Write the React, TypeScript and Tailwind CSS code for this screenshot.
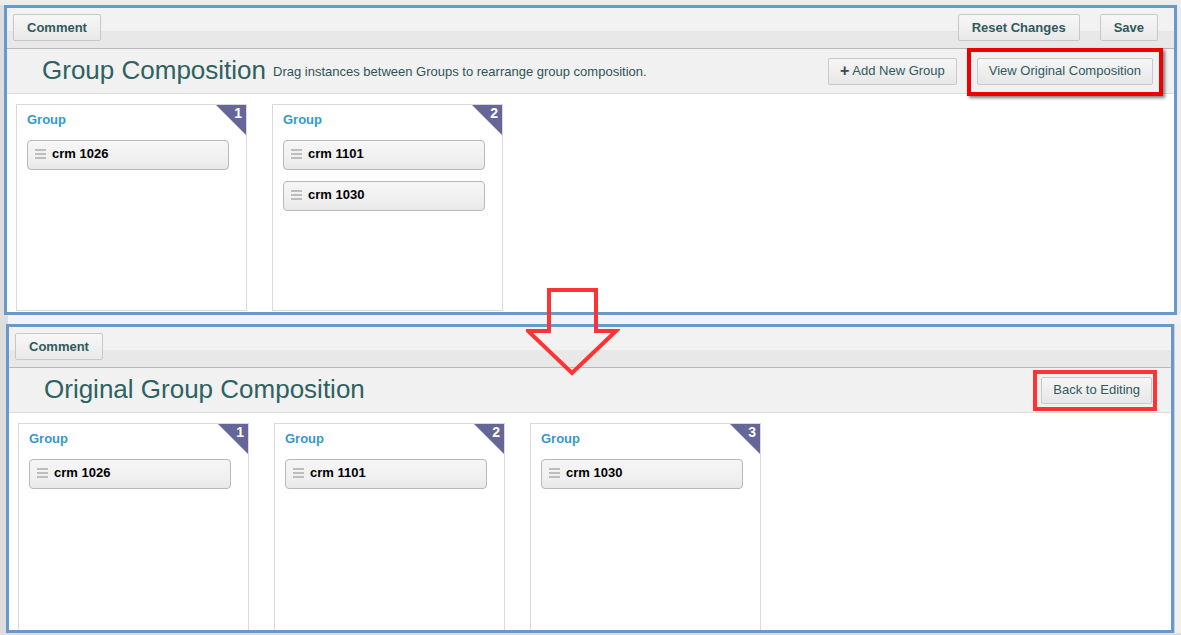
type Group = { items: string[] }

interface PanelProps {
  title: string
  subtitle?: string
  showSave?: boolean
  headerButtons: { label: string; plus?: boolean; boxed?: string }[]
  headerPad: string
  groups: Group[]
  cardHeight: string
  outerClass: string
}

const font = "font-['Liberation_Sans',Arial,sans-serif]"

function Grip() {
  return (
    <span className="flex flex-col gap-[2px] w-[11px] mr-[6px]">
      <span className="h-[2px] bg-[#bdbdbd]" />
      <span className="h-[2px] bg-[#bdbdbd]" />
      <span className="h-[2px] bg-[#bdbdbd]" />
    </span>
  )
}

function ToolButton({ label }: { label: string }) {
  return (
    <button className="h-[27px] px-[13px] border border-[#c8c8c8] rounded-[2px] bg-[linear-gradient(#f7f7f7,#e9e9e9)] text-[13px] font-bold text-[#2f5a5c]">
      {label}
    </button>
  )
}

function GroupCard({ n, group, height }: { n: number; group: Group; height: string }) {
  return (
    <div className={`relative w-[231px] ${height} shrink-0 border border-[#d9d9d9] bg-white px-[10px] pt-[7px]`}>
      <div className="text-[13px] font-bold text-[#3399cc] leading-[16px]">Group</div>
      <div className="absolute top-0 right-0 w-[30px] h-[30px] bg-[#666699] [clip-path:polygon(0_0,100%_0,100%_100%)]" />
      <span className="absolute top-[1px] right-[4px] text-[14px] font-bold text-white leading-[15px]">{n}</span>
      <div className="mt-[12px] flex flex-col gap-[11px]">
        {group.items.map((it) => (
          <div
            key={it}
            className="w-[202px] h-[30px] flex items-center pl-[7px] pb-[2px] border border-[#b8b8b8] rounded-[4px] bg-[linear-gradient(#f6f6f6,#efefef_70%,#e8e8e8)]"
          >
            <Grip />
            <span className="text-[13px] font-bold text-black">{it}</span>
          </div>
        ))}
      </div>
    </div>
  )
}

function Panel({ title, subtitle, showSave, headerButtons, headerPad, groups, cardHeight, outerClass }: PanelProps) {
  return (
    <div className={`flex flex-col border-[3px] border-[#6699cc] bg-white overflow-hidden ${outerClass}`}>
      <div className="h-[41px] shrink-0 flex items-start pt-[6px] px-[6px] border-b border-[#b9b9b9] bg-[linear-gradient(#f2f2f2_58%,#e8e8e8_58%)]">
        <ToolButton label="Comment" />
        {showSave && (
          <div className="ml-auto flex gap-[20px] pr-[10px]">
            <ToolButton label="Reset Changes" />
            <ToolButton label="Save" />
          </div>
        )}
      </div>
      <div className={`h-[45px] shrink-0 flex items-center pl-[35px] border-b border-[#dcdcdc] bg-[#f1f1f1] ${headerPad}`}>
        <span className="text-[26px] text-[#2e6162] leading-[30px] -mt-[2px]">{title}</span>
        {subtitle && <span className="ml-[7px] mt-[2px] text-[13px] text-[#2f5556]">{subtitle}</span>}
        <div className="ml-auto flex gap-[20px]">
          {headerButtons.map((b) => (
            <div key={b.label} className="relative">
              <button className="h-[27px] px-[11px] border border-[#c9c9c9] rounded-[2px] bg-[linear-gradient(#f6f6f6,#e7e7e7)] text-[13px] text-[#2f5a5c] flex items-center gap-[3px]">
                {b.plus && <span className="text-[16px] font-bold text-[#3a4a4a] leading-none">+</span>}
                {b.label}
              </button>
              {b.boxed && <span className={`absolute pointer-events-none ${b.boxed}`} />}
            </div>
          ))}
        </div>
      </div>
      <div className="flex-1 flex gap-[25px] pl-[9px] pt-[10px] overflow-hidden">
        {groups.map((g, i) => (
          <GroupCard key={i} n={i + 1} group={g} height={cardHeight} />
        ))}
      </div>
    </div>
  )
}

export default function App() {
  return (
    <div className={`relative w-[1181px] h-[635px] overflow-hidden bg-[#dedede] ${font}`}>
      <div className="absolute inset-x-0 top-0 h-[5px] bg-[#ececec]" />
      <div className="pt-[5px] flex">
        <Panel
          outerClass="ml-[4px] w-[1173px] h-[310px]"
          title="Group Composition"
          subtitle="Drag instances between Groups to rearrange group composition."
          showSave
          headerPad="pr-[21px]"
          headerButtons={[
            { label: 'Add New Group', plus: true },
            {
              label: 'View Original Composition',
              boxed: '-left-[10px] -right-[10px] -top-[10px] -bottom-[11px] border-[4px] border-[#ee0000] shadow-[2px_2px_3px_rgba(0,0,0,0.5)]',
            },
          ]}
          groups={[{ items: ['crm 1026'] }, { items: ['crm 1101', 'crm 1030'] }]}
          cardHeight="h-[207px]"
        />
        <div className="flex-1 bg-[#ebebeb]" />
      </div>
      <div className="h-[9px] ml-[8px] bg-[#f3f3f3]" />
      <div className="flex">
        <Panel
          outerClass="ml-[6px] w-[1168px] h-[309px]"
          title="Original Group Composition"
          headerPad="pr-[19px]"
          headerButtons={[
            {
              label: 'Back to Editing',
              boxed: '-left-[8px] -right-[5px] -top-[7px] -bottom-[7px] border-[4px] border-[#ff3333]',
            },
          ]}
          groups={[{ items: ['crm 1026'] }, { items: ['crm 1101'] }, { items: ['crm 1030'] }]}
          cardHeight="h-[215px]"
        />
        <div className="flex-1 border-l border-[#cfcfcf] bg-[#f0f0f0]" />
      </div>
      <svg className="absolute left-[526px] top-[287px]" width="94" height="90" viewBox="0 0 94 90">
        <path d="M23 3 L70 3 L70 44 L90 44 L46 86 L2 44 L23 44 Z" fill="none" stroke="#ff3333" strokeWidth="4" strokeLinejoin="miter" />
      </svg>
    </div>
  )
}
